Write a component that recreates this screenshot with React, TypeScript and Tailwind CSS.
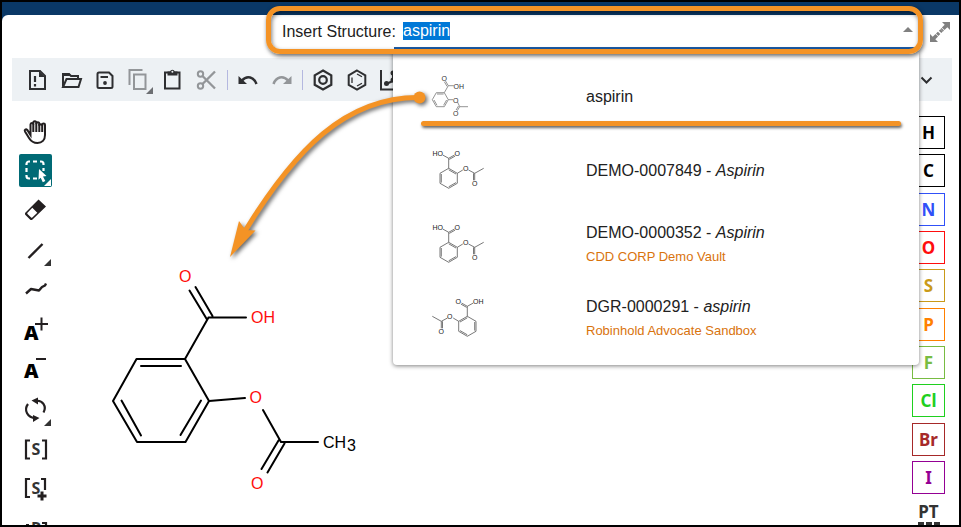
import type { ReactNode } from "react";

const Icon = ({ children, size = 24 }: { children: ReactNode; size?: number }) => (
  <svg
    width={size}
    height={size}
    viewBox={`0 0 ${size} ${size}`}
    fill="none"
    stroke="currentColor"
    strokeWidth="2"
    className="shrink-0"
    aria-hidden="true"
  >
    {children}
  </svg>
);

const ToolbarButton = ({
  label,
  muted,
  children,
}: {
  label: string;
  muted?: boolean;
  children: ReactNode;
}) => (
  <button
    type="button"
    aria-label={label}
    className={`flex h-8 w-[34px] shrink-0 items-center justify-center ${
      muted ? "text-[#939699]" : "text-[#2e2f31]"
    }`}
  >
    <Icon size={28}>{children}</Icon>
  </button>
);

const Separator = () => <div className="mx-[3px] h-5 w-px shrink-0 bg-[#b4b8e0]" />;

const Toolbar = () => (
  <div className="mr-[7px] ml-[10px] flex h-[43px] items-center justify-between overflow-hidden bg-[#edf1f4] pr-[10px] pl-2">
    <div className="flex items-center">
      <ToolbarButton label="New">
        <path d="M7 5h10l5 5v13H7z" />
        <path d="M16 5v6h6z" fill="currentColor" stroke="none" />
        <path d="M12 10v6M12 18v2.500" strokeWidth="2.200" />
      </ToolbarButton>
      <ToolbarButton label="Open">
        <path d="M6 20.500V8h6l2 2h7v3" />
        <path d="M6 21l3.500-8H24l-2.500 8z" />
        <path d="M6 7h6l2 3H6z" fill="currentColor" stroke="none" />
      </ToolbarButton>
      <ToolbarButton label="Save">
        <path d="M8 6.500h10l3.500 3.500v10.500a1.500 1.500 0 0 1-1.500 1.500H8a1.500 1.500 0 0 1-1.500-1.500V8A1.500 1.500 0 0 1 8 6.500z" />
        <path d="M9.500 11H17" />
        <circle cx="14" cy="17" r="1.900" fill="currentColor" stroke="none" />
      </ToolbarButton>
      <ToolbarButton label="Copy" muted>
        <path d="M9 8.500h11.500v14.500H9z" />
        <path d="M4.500 19V4h13" />
        <path d="M28 21v7h-7z" fill="#6d6f72" stroke="none" />
      </ToolbarButton>
      <ToolbarButton label="Paste">
        <path d="M6 6.500h14.500v16H6z" />
        <path d="M8.500 5.500H11a2.500 2.500 0 0 1 4.800 0h2.700v4h-10z" fill="currentColor" stroke="none" />
        <circle cx="13.400" cy="5.800" r="1" fill="#edf1f4" stroke="none" />
      </ToolbarButton>
      <ToolbarButton label="Cut" muted>
        <circle cx="7.500" cy="8" r="2.700" />
        <circle cx="7.500" cy="20" r="2.700" />
        <path d="M9.500 10L22 22.500M9.500 18L22 5.500" strokeWidth="2.300" />
      </ToolbarButton>
      <Separator />
      <ToolbarButton label="Undo">
        <path d="M8 14.500c5-5.500 12-3.500 14.500 3.500" strokeWidth="2.500" />
        <path d="M4.500 10v8h8.500z" fill="currentColor" stroke="none" />
      </ToolbarButton>
      <ToolbarButton label="Redo" muted>
        <path d="M20 14.500c-5-5.500-12-3.500-14.500 3.500" strokeWidth="2.500" />
        <path d="M23.500 10v8H15z" fill="currentColor" stroke="none" />
      </ToolbarButton>
      <Separator />
      <ToolbarButton label="Aromatize">
        <path d="M14 4.500l8.300 4.800v9.500L14 23.500l-8.300-4.700V9.300z" strokeWidth="2.200" />
        <circle cx="14" cy="14" r="3.800" strokeWidth="2.200" />
      </ToolbarButton>
      <ToolbarButton label="Dearomatize">
        <path d="M14 4.500l8.300 4.800v9.500L14 23.500l-8.300-4.700V9.300z" />
        <path d="M9 11.500v5.500M14 8l5 2.800M14 20l5-2.800" strokeWidth="1.300" />
      </ToolbarButton>
      <ToolbarButton label="Layout">
        <path d="M4 4v19.500h20M9 18l7-3M16 15V7" />
        <circle cx="9.500" cy="17.500" r="2.500" fill="currentColor" stroke="none" />
        <circle cx="16" cy="14" r="2.500" fill="currentColor" stroke="none" />
        <circle cx="16" cy="7" r="2.500" fill="currentColor" stroke="none" />
      </ToolbarButton>
    </div>
    <button type="button" aria-label="More tools" className="flex h-8 w-8 items-center justify-center text-[#2e2f31]">
      <Icon size={14}>
        <path d="M2.500 4.500L7.500 9.500l5-5" />
      </Icon>
    </button>
  </div>
);

const Tool = ({
  label,
  active,
  children,
}: {
  label: string;
  active?: boolean;
  children: ReactNode;
}) => (
  <button
    type="button"
    aria-label={label}
    className={`flex size-[33px] shrink-0 items-center justify-center rounded-xs ${
      active ? "bg-[#006a75] text-white" : "text-[#231f20]"
    }`}
  >
    <Icon size={33}>{children}</Icon>
  </button>
);

const Corner = () => <path d="M32 25v7h-7z" fill="#333" stroke="none" />;

const glyph = "fill-[#333] stroke-none font-['Open_Sans',sans-serif] text-[16px] font-bold";
const bigA = "fill-black stroke-none font-['Open_Sans',sans-serif] text-[20px] font-extrabold";

const LeftTools = () => (
  <div className="flex w-[60px] shrink-0 flex-col gap-[7px] pt-[13px] pl-[17px]">
    <Tool label="Hand">
      <path
        d="M11.500 20V9.500c0-2 2.800-2 2.800 0V7.800c0-2.200 3-2.200 3 0v1c0-2 3-2 3 0v2c0-2 2.900-2 2.900 0V9.800c0-1.800 2.800-1.800 2.800 0V20c0 5-3 8-7.500 8-5 0-7-2.500-8.500-5l-4-6.500c-1-1.800 1-2.800 2.300-1.500z"
        strokeWidth="2"
        transform="translate(0 1)"
      />
      <path d="M14.300 10v8M17.300 9v9M20.300 10v8M23.200 11v7" strokeWidth="2" />
    </Tool>
    <Tool label="Rectangle selection" active>
      <path
        d="M7.500 11v-1a2.500 2.500 0 0 1 2.500-2.500h1M14 7.500h4M21 7.500h1a2.500 2.500 0 0 1 2.500 2.500v1M24.500 14v3M7.500 14v4M7.500 21v1a2.500 2.500 0 0 0 2.500 2.500h1M14 24.500h4"
        strokeWidth="2.200"
      />
      <path d="M20 15l7.500 7-3.500.500 2.300 4.500-2.500 1.200-2.100-4.500-2.200 2z" fill="white" stroke="none" />
      <path d="M32 25v7h-7z" fill="white" stroke="none" />
    </Tool>
    <Tool label="Erase">
      <path d="M19.500 5.500l7.500 7-13.500 13c-.800.700-1.800.700-2.500 0L6.500 21c-.700-.700-.700-1.800 0-2.500z" fill="currentColor" stroke="none" />
      <path d="M13.300 13.800l5 5-5 4.700c-.400.400-.800.400-1.200 0L8.500 20c-.400-.400-.400-.800 0-1.200z" fill="white" stroke="none" />
    </Tool>
    <Tool label="Single bond">
      <path d="M9.500 24l14-14" strokeWidth="2.400" />
      <Corner />
    </Tool>
    <Tool label="Chain">
      <path d="M7 19.500l5-4.500 8 1.500 3-3.500 3-1.500 1-2" strokeWidth="2.400" strokeLinejoin="round" />
    </Tool>
    <Tool label="Charge plus">
      <text x="5" y="26" className={bigA}>A</text>
      <path d="M22.500 3.500v13M16 10h13" />
    </Tool>
    <Tool label="Charge minus">
      <text x="5" y="24" className={bigA}>A</text>
      <path d="M17 5h10" />
    </Tool>
    <Tool label="Rotate">
      <path d="M16.500 7c7-1.500 11.500 5.500 8 11.500M9 10c-4.500 6-.500 14 7.500 14" strokeWidth="2.200" />
      <path d="M12.500 6.500l6.500-3v7zM20.500 24l-6.500-3v7z" fill="currentColor" stroke="none" />
      <Corner />
    </Tool>
    <Tool label="S-group">
      <path d="M11 6.500H7v18h4M23 6.500h4v18h-4" strokeWidth="2.200" />
      <text x="12.500" y="21" className={glyph}>S</text>
    </Tool>
    <Tool label="Add S-group">
      <path d="M11 5H7v18h4M22 5h4v11" strokeWidth="2.200" />
      <text x="12.500" y="19.500" className={glyph}>S</text>
      <path d="M23 17.500v9M18.500 22h9" strokeWidth="3" />
    </Tool>
    <Tool label="R-group">
      <path d="M7 11h3M23 9h4v18h-4" strokeWidth="2.200" />
      <text x="12" y="20" className={glyph}>R</text>
    </Tool>
  </div>
);

const elements = [
  { symbol: "H", color: "border-black text-black" },
  { symbol: "C", color: "border-black text-black" },
  { symbol: "N", color: "border-[#3050f8] text-[#3050f8]" },
  { symbol: "O", color: "border-[#ff0d0d] text-[#ff0d0d]" },
  { symbol: "S", color: "border-[#c99a19] text-[#c99a19]" },
  { symbol: "P", color: "border-[#ff8000] text-[#ff8000]" },
  { symbol: "F", color: "border-[#78bc42] text-[#78bc42]" },
  { symbol: "Cl", color: "border-[#1fd01f] text-[#1fd01f]" },
  { symbol: "Br", color: "border-[#a62929] text-[#a62929]" },
  { symbol: "I", color: "border-[#940094] text-[#940094]" },
];

const ElementPanel = () => (
  <div className="flex shrink-0 flex-col items-center pt-[15px] pr-[14px] font-['Noto_Sans',sans-serif] text-[17px] font-bold">
    <div className="flex h-[378px] shrink-0 flex-col justify-between">
      {elements.map((el) => (
        <button
          key={el.symbol}
          type="button"
          className={`flex size-[33px] items-center justify-center border leading-none ${el.color}`}
        >
          {el.symbol}
        </button>
      ))}
    </div>
    <button type="button" className="mt-2 flex shrink-0 flex-col items-center text-[#333]">
      <span className="leading-5">PT</span>
      <svg width="22" height="12" viewBox="0 0 22 12" fill="currentColor" aria-hidden="true">
        <path d="M0 0h6v5H0zM8 0h6v5H8zM16 0h6v5h-6zM0 7h6v5H0zM8 7h6v5H8zM16 7h6v5h-6z" />
      </svg>
    </button>
  </div>
);

const Canvas = () => (
  <div className="min-w-0 flex-1 overflow-hidden pt-[159px] pl-[38px]">
    <svg
      width="280"
      height="240"
      viewBox="100 260 280 240"
      fill="none"
      stroke="black"
      strokeWidth="2"
      strokeLinecap="round"
      className="font-['Liberation_Sans',sans-serif] text-[16px]"
      role="img"
      aria-label="Aspirin"
    >
      <path d="M185 359h-48.500L113 401l24 41h48.500L209 401z" strokeLinejoin="round" />
      <path d="M141 366h40M121.500 400.500l19.500 35M201 400.500L180.500 435" />
      <path d="M185 359l23.500-41.500H246M189.500 290.500l17.500 29M195.500 287l17 29" />
      <path d="M209 401l36-3M263 410l18 32h37M278.500 440.500L261.500 469M284.500 443.500L267.500 472.500" />
      <g stroke="none" className="fill-[#ff0d0d]">
        <text x="179" y="282">O</text>
        <text x="251" y="323">OH</text>
        <text x="249.500" y="403">O</text>
        <text x="251" y="489">O</text>
      </g>
      <g stroke="none" fill="black">
        <text x="323" y="448">CH</text>
        <text x="347" y="451">3</text>
      </g>
    </svg>
  </div>
);

const thumbClass = "font-['Liberation_Sans',sans-serif] text-[7px]";

const ThumbDrawn = () => (
  <svg width="58" height="46" viewBox="0 -1 58 46" fill="none" stroke="#777" strokeWidth="0.8" className={thumbClass} aria-hidden="true">
    <path d="M14.300 17.700h-8l-4 7 4 7h8l4-7zM7 19h6.600M4 25l3 5.300M16.600 25l-3 5.300" />
    <path d="M14.300 17.700l4-7h5.500M18.300 10.700L15.500 6M17.100 11.400L14.300 6.700" />
    <path d="M18.300 24.700h4.700M27.500 27l2.200 4.700H38M29.700 31.700l-2.400 4M28.500 31l-2.400 4" />
    <g stroke="none" fill="#333">
      <text x="11.500" y="6">O</text>
      <text x="23.500" y="13.500">OH</text>
      <text x="23" y="27.500">O</text>
      <text x="23" y="41">O</text>
    </g>
  </svg>
);

const bonds = (
  <>
    <path d="M18.700 20.300l8.600 5v10l-8.600 5-8.700-5v-10zM11.300 26v8.600M18.700 38.800l7.300-4.200M18.700 21.800l7.300 4.200" />
    <path d="M18.700 20.300v-10l-6-3.300M18.700 10.300L24.500 7M19.300 11.400l5.800-3.300" />
    <path d="M27.300 25.300l5.500-3.300M38.500 22l6.200 3.300 9-5M44.700 25.300v7M43.500 25.300v7" />
  </>
);

const Thumb = ({ flipped }: { flipped?: boolean }) => (
  <svg width="58" height="46" viewBox="0 0 58 46" fill="none" stroke="#555" strokeWidth="0.8" className={thumbClass} aria-hidden="true">
    {flipped ? <g transform="matrix(-1 0 0 1 56 0)">{bonds}</g> : bonds}
    <g stroke="none" fill="#222">
      {flipped ? (
        <>
          <text x="25.500" y="8.300">O</text>
          <text x="43" y="8.300">OH</text>
          <text x="17" y="23.300">O</text>
          <text x="8.500" y="38.300">O</text>
        </>
      ) : (
        <>
          <text x="2.500" y="8.300">HO</text>
          <text x="24.500" y="8.300">O</text>
          <text x="33" y="23.300">O</text>
          <text x="42" y="38.300">O</text>
        </>
      )}
    </g>
  </svg>
);

const results = [
  { id: "", name: "aspirin", vault: "", thumb: <ThumbDrawn /> },
  { id: "DEMO-0007849", name: "Aspirin", vault: "", thumb: <Thumb /> },
  { id: "DEMO-0000352", name: "Aspirin", vault: "CDD CORP Demo Vault", thumb: <Thumb /> },
  { id: "DGR-0000291", name: "aspirin", vault: "Robinhold Advocate Sandbox", thumb: <Thumb flipped /> },
];

const ResultMenu = () => (
  <div
    role="listbox"
    aria-label="Structures"
    className="absolute top-[37px] -right-[2px] -left-px rounded-b bg-white pt-2 pb-[9px] shadow-[0_1px_4px_rgba(0,0,0,0.5)]"
  >
    {results.map((r) => (
      <button
        key={r.id + r.name}
        type="button"
        role="option"
        aria-selected={false}
        className="flex h-[74px] w-full items-center pl-[37px] text-left"
      >
        <span className="w-[156px] shrink-0">{r.thumb}</span>
        <span className="flex flex-col">
          <span className="text-base leading-6 text-[#212121]">
            {r.id ? (
              <>
                {r.id} - <em>{r.name}</em>
              </>
            ) : (
              r.name
            )}
          </span>
          {r.vault && <span className="text-[13px] leading-6 text-[#d9730d]">{r.vault}</span>}
        </span>
      </button>
    ))}
    {/* callout line under the first result */}
    <div className="absolute top-[69px] right-[18px] left-7 h-[5px] rounded-full bg-[#f49325] shadow-[1px_2px_3px_rgba(0,0,0,0.6)]" />
  </div>
);

const Header = () => (
  <div className="flex h-[43px] items-start">
    <div className="relative z-10 ml-[280px] flex h-[34px] flex-1 items-center">
      <label htmlFor="structure" className="w-28 shrink-0 text-base whitespace-nowrap text-[#212121]">
        Insert Structure:
      </label>
      <div className="relative flex h-[34px] flex-1 items-center justify-between border-b-2 border-[#1c5ba5] pr-1 pl-[9px]">
        <input
          id="structure"
          type="text"
          defaultValue="aspirin"
          className="field-sizing-content h-[18px] bg-[#0078d7] text-base leading-[18px] text-white outline-none"
        />
        <svg width="10" height="5" viewBox="0 0 10 5" className="mb-1 fill-[#808080]" aria-hidden="true">
          <path d="M0 5l5-5 5 5z" />
        </svg>
        <ResultMenu />
      </div>
      <div className="pointer-events-none absolute -top-[9px] -right-[6px] -bottom-[5px] -left-4 rounded-[14px] border-[5px] border-[#f49325] shadow-[1px_2px_4px_rgba(0,0,0,0.6),inset_1px_2px_4px_rgba(0,0,0,0.5)]" />
    </div>
    <button type="button" aria-label="Full screen" className="mt-[7px] mr-[9px] ml-[13px] text-[#808080]">
      <Icon size={20}>
        <path d="M12 0h8v8l-2.700-2.700-2.800 2.800-2.600-2.600 2.800-2.800zM0 12v8h8l-2.700-2.700 2.800-2.800-2.600-2.600-2.800 2.800z" fill="currentColor" stroke="none" />
        <path d="M11.800 8.200l1-1M7.200 12.800l1.900-1.900M10.100 9.900l1.500-1.500" strokeWidth="3.400" />
      </Icon>
    </button>
  </div>
);

// Callout arrow from the first result to the drawn structure
const CalloutArrow = () => (
  <svg
    width="220"
    height="190"
    viewBox="220 80 220 190"
    className="pointer-events-none absolute top-[78px] left-[218px] z-20 drop-shadow-[2px_2px_2px_rgba(0,0,0,0.6)]"
    aria-hidden="true"
  >
    <path d="M419 97.500C345 97 295 150 245 231" fill="none" stroke="#f49325" strokeWidth="5" />
    <circle cx="419.500" cy="97.500" r="6" fill="#f49325" />
    <path d="M230 257l9-36 6.500 9 10 .500z" fill="#f49325" />
  </svg>
);

const App = () => {
  return (
    <div className="relative flex h-screen flex-col overflow-hidden border-2 border-black bg-[#0a3866] pt-[13px] font-['Liberation_Sans',Arial,sans-serif]">
      <div className="flex min-h-0 flex-1 flex-col rounded-tl-md bg-white">
        <Header />
        <Toolbar />
        <div className="flex min-h-0 flex-1">
          <LeftTools />
          <Canvas />
          <ElementPanel />
        </div>
      </div>
      <CalloutArrow />
    </div>
  );
};

export default App;
